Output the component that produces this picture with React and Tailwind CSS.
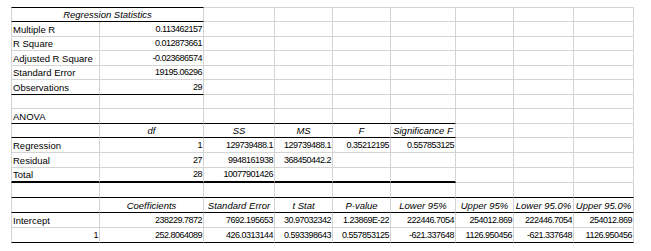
import React from 'react';

const GRID = 'grid grid-cols-[89px_104px_71px_58px_58px_65px_58px_60px_60px]';

// each row: height, cells (9 values, '' for empty), count of leading cells with a black bottom edge
const rows = [
  { h: 'h-[15px]', cells: ['Multiple R', '0.113462157'], black: 0 },
  { h: 'h-[14px]', cells: ['R Square', '0.012873661'], black: 0 },
  { h: 'h-[15px]', cells: ['Adjusted R Square', '-0.023686574'], black: 0 },
  { h: 'h-[14px]', cells: ['Standard Error', '19195.06296'], black: 0 },
  { h: 'h-[15px]', cells: ['Observations', '29'], black: 2 },
  { h: 'h-[14px]', cells: [], black: 0 },
  { h: 'h-[15px]', cells: ['ANOVA'], black: 6 },
  { h: 'h-[14px]', cells: ['', 'df', 'SS', 'MS', 'F', 'Significance F'], black: 6, header: true },
  { h: 'h-[15px]', cells: ['Regression', '1', '129739488.1', '129739488.1', '0.35212195', '0.557853125'], black: 0 },
  { h: 'h-[15px]', cells: ['Residual', '27', '9948161938', '368450442.2'], black: 0 },
  { h: 'h-[15px]', cells: ['Total', '28', '10077901426'], black: 6, thick: true },
  { h: 'h-[15px]', cells: [], black: 9 },
  {
    h: 'h-[15px]',
    cells: ['', 'Coefficients', 'Standard Error', 't Stat', 'P-value', 'Lower 95%', 'Upper 95%', 'Lower 95.0%', 'Upper 95.0%'],
    black: 9,
    header: true,
  },
  {
    h: 'h-[15px]',
    cells: ['Intercept', '238229.7872', '7692.195653', '30.97032342', '1.23869E-22', '222446.7054', '254012.869', '222446.7054', '254012.869'],
    black: 0,
  },
  {
    h: 'h-[15px]',
    cells: ['1', '252.8064089', '426.0313144', '0.593398643', '0.557853125', '-621.337648', '1126.950456', '-621.337648', '1126.950456'],
    black: 9,
  },
];

const isNumber = (v) => /^-?[\d.]+(E-?\d+)?$/.test(v);

const Cell = ({ value, col, bottom, header }) => {
  const align = header
    ? 'justify-center italic text-[9.5px]'
    : isNumber(value)
      ? 'justify-end text-[9px] tracking-[-0.5px]'
      : 'justify-start text-[9.5px]';
  return (
    <div
      className={`flex items-end px-[1px] pb-[1px] leading-[11px] whitespace-nowrap border-r border-r-[#d4d4d4] ${bottom} ${align} ${
        col === 0 ? 'border-l border-l-[#d4d4d4]' : ''
      }`}
    >
      {value}
    </div>
  );
};

const bottomClass = (row, col) => {
  if (col < row.black) return row.thick ? 'border-b-2 border-b-black' : 'border-b border-b-black';
  return 'border-b border-b-[#d4d4d4]';
};

export default function App() {
  return (
    <div className="w-[651px] h-[251px] bg-white text-black font-['Liberation_Sans',Arial,sans-serif] overflow-hidden">
      <div className="ml-[11px] pt-[7px] w-[623px]">
        <div className={`${GRID} h-[15px]`}>
          <div className="col-span-2 flex items-end justify-center pb-[1px] leading-[11px] text-[9.5px] italic border-l border-l-[#d4d4d4] border-r border-r-[#d4d4d4] border-t border-t-black border-b border-b-black">
            Regression Statistics
          </div>
          {Array.from({ length: 7 }).map((_, i) => (
            <div key={i} className="border-t border-t-[#d4d4d4] border-r border-r-[#d4d4d4] border-b border-b-[#d4d4d4]" />
          ))}
        </div>
        {rows.map((row, r) => (
          <div key={r} className={`${GRID} ${row.h}`}>
            {Array.from({ length: 9 }).map((_, c) => (
              <Cell key={c} value={row.cells[c] || ''} col={c} bottom={bottomClass(row, c)} header={row.header} />
            ))}
          </div>
        ))}
      </div>
    </div>
  );
}
